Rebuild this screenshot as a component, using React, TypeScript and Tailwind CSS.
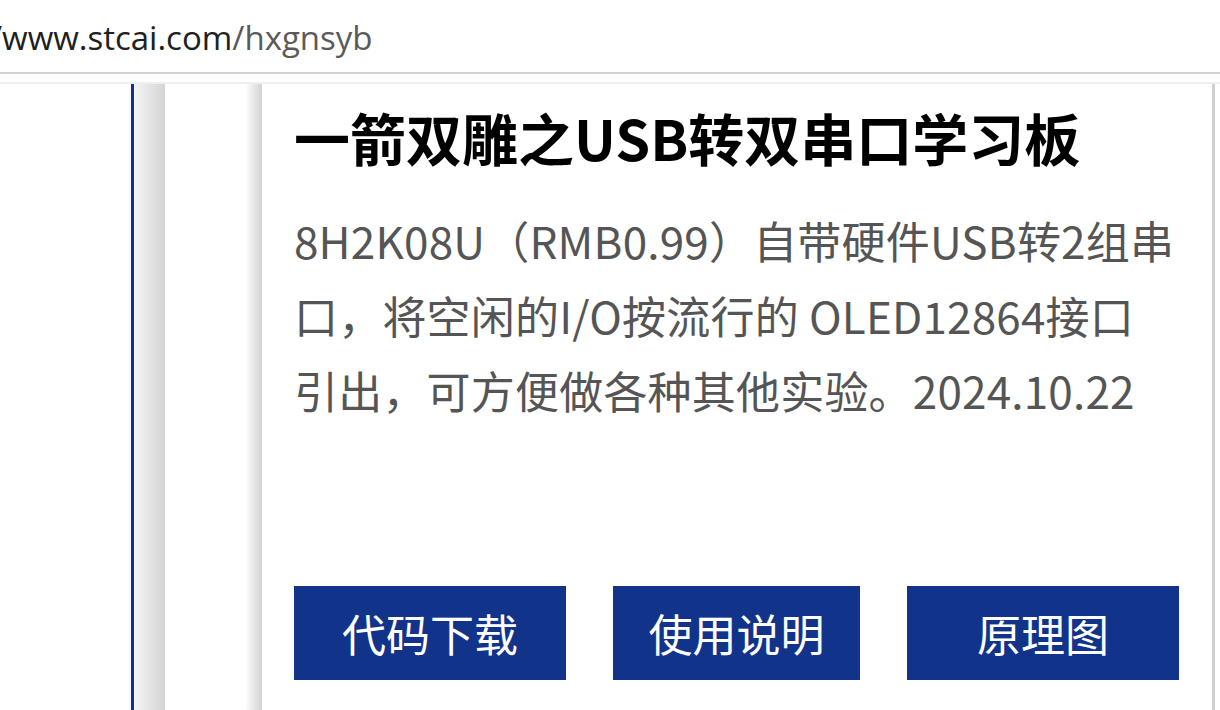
import React from "react";

const blue = "bg-[#12338a]";

// address strip at the top ---------------------------------------------
function AddressBar() {
  return (
    <div className="h-[72px] flex items-center overflow-hidden">
      <div
        className="-ml-[10px] pt-[2px] text-[33px] leading-none whitespace-nowrap"
        style={{ fontFamily: '"Open Sans", "Noto Sans", sans-serif' }}
      >
        <span className="text-[#202020]">/www.stcai.com</span>
        <span className="text-[#5a5a5a]">/hxgnsyb</span>
      </div>
    </div>
  );
}

function Btn({ label, w }: { label: string; w: string }) {
  return (
    <a
      href="#"
      className={`${blue} ${w} h-[94px] flex items-center justify-center text-white text-[44px] leading-none`}
    >
      {label}
    </a>
  );
}

// product card --------------------------------------------------------
function Card() {
  return (
    <div className="flex-1 bg-white border-r-[3px] border-[#d0d0d0] pl-[32px] pt-[21px]">
      <h1 className="text-[56px] leading-[64px] font-bold text-black">
        一箭双雕之USB转双串口学习板
      </h1>
      <p className="mt-[34px] text-[44px] leading-[75px] text-[#555555] w-[900px] tracking-[0.2px]">
        8H2K08U（RMB0.99）自带硬件USB转2组串
        <br />
        口，将空闲的I/O按流行的 OLED12864接口
        <br />
        引出，可方便做各种其他实验。2024.10.22
      </p>
      <div className="mt-[158px] flex gap-[47px]">
        <Btn label="代码下载" w="w-[272px]" />
        <Btn label="使用说明" w="w-[247px]" />
        <Btn label="原理图" w="w-[272px]" />
      </div>
    </div>
  );
}

export default function App() {
  return (
    <div
      className="w-[1220px] h-[710px] overflow-hidden bg-white flex flex-col"
      style={{ fontFamily: '"Noto Sans CJK SC", "Noto Sans", sans-serif' }}
    >
      <AddressBar />
      <div className="h-[2px] bg-[#d3d3d3]" />
      <div className="h-[8px]" />
      <div className="h-[2px] bg-[#efefef]" />
      <div className="flex-1 flex">
        <div className="w-[131px]" />
        <div className={`w-[3px] ${blue}`} />
        <div className="w-[31px] bg-gradient-to-r from-[#f5f5f5] to-[#d4d4d4]" />
        <div className="w-[80px]" />
        <div className="w-[17px] bg-gradient-to-r from-white to-[#d2d2d2]" />
        <Card />
        <div className="w-[5px]" />
      </div>
    </div>
  );
}
